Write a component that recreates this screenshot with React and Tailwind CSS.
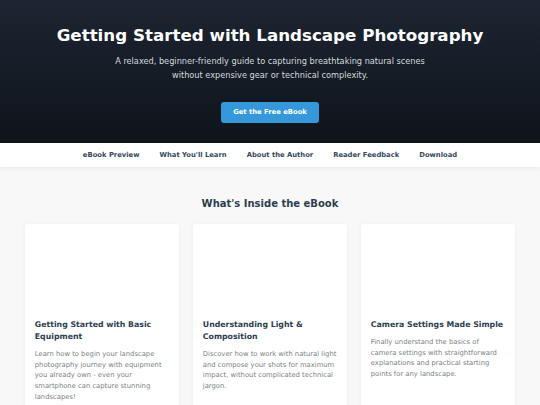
import React from 'react';

const navItems = ['eBook Preview', "What You'll Learn", 'About the Author', 'Reader Feedback', 'Download'];

const chapters = [
    {
        title: 'Getting Started with Basic Equipment',
        text: 'Learn how to begin your landscape photography journey with equipment you already own - even your smartphone can capture stunning landscapes!',
    },
    {
        title: 'Understanding Light & Composition',
        text: 'Discover how to work with natural light and compose your shots for maximum impact, without complicated technical jargon.',
    },
    {
        title: 'Camera Settings Made Simple',
        text: 'Finally understand the basics of camera settings with straightforward explanations and practical starting points for any landscape.',
    },
];

const App = () => {
    return (
        <div className="min-h-screen bg-[#f8f8f8] font-['DejaVu_Sans',sans-serif] overflow-hidden">
            {/* Hero */}
            <header className="h-[143px] bg-gradient-to-b from-[#1d2532] to-[#0f141b] flex flex-col items-center text-center pt-[24px]">
                <h1 className="text-[16.7px] leading-[22px] font-bold text-white">
                    Getting Started with Landscape Photography
                </h1>
                <p className="mt-[8px] text-[8.2px] leading-[14px] text-[#d5d9de] max-w-[330px]">
                    A relaxed, beginner-friendly guide to capturing breathtaking natural scenes without expensive gear or technical complexity.
                </p>
                <button className="mt-[20px] w-[98px] h-[21px] rounded-[3px] bg-[#3498db] text-white text-[6.8px] font-bold">
                    Get the Free eBook
                </button>
            </header>

            {/* Nav */}
            <nav className="h-[24px] bg-white shadow-[0_2px_4px_rgba(0,0,0,0.06)] flex items-center justify-center gap-[20px] relative z-10">
                {navItems.map((item) => (
                    <a key={item} className="text-[6.8px] font-bold text-[#34495e]">{item}</a>
                ))}
            </nav>

            {/* Chapters */}
            <section className="px-[25px] pt-[30px]">
                <h2 className="text-center text-[10px] leading-[14px] font-bold text-[#2c3e50]">
                    What's Inside the eBook
                </h2>
                <div className="mt-[13px] grid grid-cols-3 gap-[14px]">
                    {chapters.map((c) => (
                        <div key={c.title} className="bg-white rounded-[4px] shadow-[0_1px_4px_rgba(0,0,0,0.05)] h-[200px]">
                            <div className="h-[90px]" />
                            <div className="px-[9.8px] pt-[5px]">
                                <h3 className="text-[7.8px] leading-[12px] font-bold text-[#2c3e50]">{c.title}</h3>
                                <p className="mt-[6px] text-[6.8px] leading-[10.7px] text-[#7b7f82]">{c.text}</p>
                            </div>
                        </div>
                    ))}
                </div>
            </section>
        </div>
    );
};

export default App;
